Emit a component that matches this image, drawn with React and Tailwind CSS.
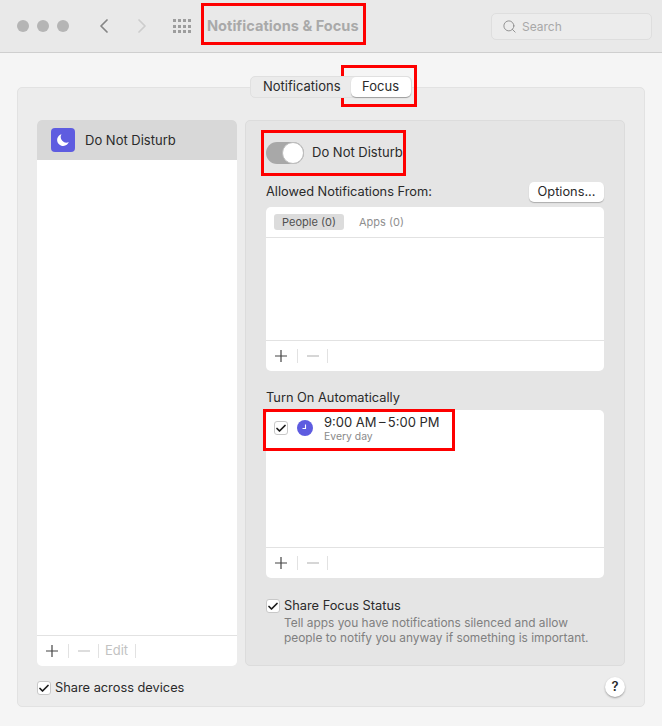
import React from "react";
import { Check, ChevronLeft, ChevronRight, Search } from "lucide-react";

const font = { fontFamily: "Inter, 'Liberation Sans', sans-serif" };

function Checkbox({ className = "" }) {
    return (
        <span className={`flex h-[14px] w-[14px] shrink-0 items-center justify-center rounded-[3px] border border-[#c8c8c8] bg-white ${className}`}>
            <Check size={13} strokeWidth={3.5} className="text-[#1c1c1c]" />
        </span>
    );
}

function Footer({ edit }) {
    return (
        <div className="flex h-[31px] items-center border-t border-[#e2e2e2] text-[#4a4a4a]">
            <span className="flex w-[31px] justify-center pr-[1px]">
                <svg width="12" height="12" viewBox="0 0 12 12"><path d="M6 0v12M0 6h12" stroke="#444" strokeWidth="1.2" /></svg>
            </span>
            <span className="h-[14px] w-px bg-[#e2e2e2]" />
            <span className="flex w-[29px] justify-center">
                <svg width="12" height="12" viewBox="0 0 12 12"><path d="M0 6h12" stroke="#bbb" strokeWidth="1.2" /></svg>
            </span>
            <span className="h-[14px] w-px bg-[#e2e2e2]" />
            {edit && <span className="w-[36px] pr-[1px] text-center text-[13px] text-[#c2c2c2]">Edit</span>}
            {edit && <span className="h-[14px] w-px bg-[#e2e2e2]" />}
        </div>
    );
}

function Annotation({ className }) {
    return <div className={`absolute border-[3px] border-[#fe0000] ${className}`} />;
}

export default function App() {
    return (
        <div className="relative h-[726px] w-[662px] overflow-hidden bg-[#f5f5f5] text-[#2a2a2a]" style={font}>
            <div className="flex h-[53px] items-center border-b border-[#cfcfcf] bg-[#e9e9e9] pl-[17px] pr-[10px]">
                <div className="flex gap-[8px]">
                    <span className="h-[12px] w-[12px] rounded-full bg-[#b5b5b5]" />
                    <span className="h-[12px] w-[12px] rounded-full bg-[#b5b5b5]" />
                    <span className="h-[12px] w-[12px] rounded-full bg-[#b5b5b5]" />
                </div>
                <ChevronLeft size={24} strokeWidth={1.75} className="ml-[23px] text-[#858585]" />
                <ChevronRight size={24} strokeWidth={1.75} className="ml-[14px] text-[#cdcdcd]" />
                <div className="ml-[19px] grid grid-cols-4 gap-x-[2px] gap-y-[2.5px]">
                    {Array.from({ length: 12 }).map((_, i) => (
                        <span key={i} className="h-[3px] w-[3px] bg-[#9d9d9d]" />
                    ))}
                </div>
                <span className="ml-[16px] mt-[2px] text-[14.6px] font-bold text-[#a9a9a9]">Notifications &amp; Focus</span>
                <div className="ml-auto flex h-[27px] w-[161px] items-center rounded-[5px] border border-[#dedede] bg-[#ececec] pl-[10px]">
                    <Search size={15} strokeWidth={1.5} className="text-[#8d8d8d]" />
                    <span className="ml-[5px] mt-[1px] text-[12px] text-[#a8a8a8]">Search</span>
                </div>
            </div>

            <div className="relative z-10 mt-[23px] flex h-[22px] justify-center">
                <div className="flex h-[22px] w-[162px] items-center rounded-[5px] border border-[#e0e0e0] bg-[#ebebeb] pl-[12px] text-[13px]">
                    <span>Notifications</span>
                    <span className="ml-[10px] flex h-[20px] w-[60px] items-center justify-center rounded-[5px] bg-white shadow-[0_1px_1px_rgba(0,0,0,0.3)]">Focus</span>
                </div>
            </div>

            <div className="mx-[17px] mt-[-11px] flex h-[620px] w-[628px] flex-col rounded-[5px] border border-[#e2e2e2] bg-[#ececec] pl-[19px] pr-[19px] pt-[32px] text-[12.8px]">
                <div className="flex h-[546px] gap-[8px]">
                    <div className="flex w-[200px] flex-col overflow-hidden rounded-[5px] bg-white">
                        <div className="flex h-[40px] items-center bg-[#d8d8d8] pl-[14px]">
                            <span className="flex h-[24px] w-[24px] items-center justify-center rounded-[4px] bg-[#5e5ce0]">
                                <svg width="16" height="16" viewBox="0 0 16 16"><path d="M6.5 2.2A6 6 0 1 0 13.8 10 5.6 5.6 0 0 1 6.5 2.2Z" fill="white" /></svg>
                            </span>
                            <span className="ml-[10px] mt-[2px] text-[13px]">Do Not Disturb</span>
                        </div>
                        <div className="flex-1" />
                        <Footer edit />
                    </div>

                    <div className="flex w-[380px] flex-col rounded-[5px] border border-[#dcdcdc] bg-[#e5e5e5] pl-[20px] pr-[20px]">
                        <div className="mt-[21px] flex h-[22px] items-center">
                            <span className="relative h-[22px] w-[38px] rounded-full bg-[#a8a8a8]">
                                <span className="absolute right-0 top-0 h-[22px] w-[22px] rounded-full border border-[#bdbdbd] bg-white" />
                            </span>
                            <span className="ml-[8px] text-[13px]">Do Not Disturb</span>
                        </div>
                        <div className="mt-[17px] flex h-[21px] items-center justify-between">
                            <span>Allowed Notifications From:</span>
                            <span className="flex h-[20px] w-[75px] items-center justify-center rounded-[5px] bg-white shadow-[0_1px_1px_rgba(0,0,0,0.25)]">Options...</span>
                        </div>
                        <div className="mt-[5px] flex h-[164px] flex-col rounded-[5px] bg-white">
                            <div className="flex h-[31px] items-center border-b border-[#e2e2e2] pl-[8px] text-[11px]">
                                <span className="flex h-[16px] w-[70px] items-center justify-center rounded-[3px] bg-[#dcdcdc] text-[#4f4f4f]">People (0)</span>
                                <span className="ml-[15px] text-[#8f8f8f]">Apps (0)</span>
                            </div>
                            <div className="flex-1" />
                            <Footer />
                        </div>
                        <div className="mt-[19px] h-[20px] leading-[16px]">Turn On Automatically</div>
                        <div className="flex h-[168px] flex-col rounded-[5px] bg-white">
                            <div className="flex flex-1 items-start pl-[8px] pt-[4px]">
                                <Checkbox className="mt-[7px]" />
                                <span className="ml-[9px] mt-[6px] flex h-[16px] w-[16px] items-center justify-center rounded-full bg-[#5e5ce0]">
                                    <svg width="10" height="10" viewBox="0 0 10 10"><path d="M5.5 1.5v4H2.5" fill="none" stroke="white" strokeWidth="1.1" /></svg>
                                </span>
                                <div className="ml-[11px]">
                                    <div className="text-[13px] leading-[16px]">9:00 AM{"\u2009"}–{"\u2009"}5:00 PM</div>
                                    <div className="mt-[1px] text-[10.4px] leading-[12px] text-[#8a8a8a]">Every day</div>
                                </div>
                            </div>
                            <Footer />
                        </div>
                        <div className="mt-[20px] flex items-start">
                            <Checkbox className="mt-[1px]" />
                            <div className="ml-[4px]">
                                <div className="leading-[16px]">Share Focus Status</div>
                                <div className="mt-[1px] text-[11.9px] leading-[15px] text-[#808080]">
                                    Tell apps you have notifications silenced and allow
                                    <br />
                                    people to notify you anyway if something is important.
                                </div>
                            </div>
                        </div>
                    </div>
                </div>
                <div className="mt-[12px] flex h-[20px] items-center">
                    <Checkbox />
                    <span className="ml-[4px]">Share across devices</span>
                    <span className="ml-auto mt-[-2px] flex h-[20px] w-[20px] items-center justify-center rounded-full bg-white text-[13px] font-semibold shadow-[0_1px_2px_rgba(0,0,0,0.35)]">?</span>
                </div>
            </div>

            <Annotation className="left-[201px] top-[3px] h-[42px] w-[165px]" />
            <Annotation className="left-[341px] top-[65px] h-[42px] w-[76px]" />
            <Annotation className="left-[261px] top-[130px] h-[46px] w-[145px]" />
            <Annotation className="left-[263px] top-[409px] h-[42px] w-[192px]" />
        </div>
    );
}
